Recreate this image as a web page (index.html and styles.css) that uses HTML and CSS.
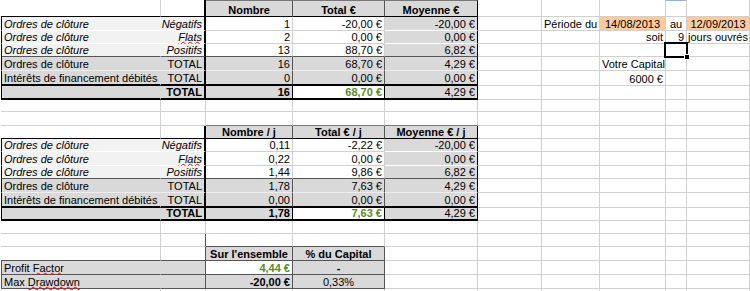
FILE: index.html
```html
<!DOCTYPE html>
<html lang="fr">
<head>
<meta charset="utf-8">
<title>Statistiques</title>
<link rel="stylesheet" href="styles.css">
</head>
<body>
<div class="sheet">
  <!-- r1 -->
  <div class="c bK"></div>
  <div class="c bK rK2"></div>
  <div class="c f2 b m tD bK rD">Nombre</div>
  <div class="c f2 b m tD bK rD">Total €</div>
  <div class="c f2 b m tD bK rK">Moyenne €</div>
  <div class="c"></div><div class="c"></div><div class="c"></div><div class="c colsel"></div><div class="c"></div>
  <!-- r2 -->
  <div class="c f1 it lK bW rT">Ordres de clôture</div>
  <div class="c f1 it r bW rK2">Négatifs</div>
  <div class="c r">1</div>
  <div class="c r">-20,00 €</div>
  <div class="c f2 r bW rK">-20,00 €</div>
  <div class="c"></div>
  <div class="c">Période du</div>
  <div class="c fo m">14/08/2013</div>
  <div class="c m">au</div>
  <div class="c fo m">12/09/2013</div>
  <!-- r3 -->
  <div class="c f1 it lK bW rT">Ordres de clôture</div>
  <div class="c f1 it r bW rK2"><span class="sq">Flats</span></div>
  <div class="c r">2</div>
  <div class="c r">0,00 €</div>
  <div class="c f2 r bW rK">0,00 €</div>
  <div class="c"></div><div class="c"></div>
  <div class="c r">soit</div>
  <div class="c r">9</div>
  <div class="c tight">jours ouvrés</div>
  <!-- r4 -->
  <div class="c f1 it lK bD rT">Ordres de clôture</div>
  <div class="c f1 it r bD rK2">Positifs</div>
  <div class="c r bD">13</div>
  <div class="c r bD">88,70 €</div>
  <div class="c f2 r bD rK">6,82 €</div>
  <div class="c"></div><div class="c"></div><div class="c"></div>
  <div class="c sel"></div>
  <div class="c"></div>
  <!-- r5 -->
  <div class="c f2 lK bL rT">Ordres de clôture</div>
  <div class="c f2 r bL rK2">TOTAL</div>
  <div class="c f2 r bL rD">16</div>
  <div class="c f2 r bL rD">68,70 €</div>
  <div class="c f2 r bL rK">4,29 €</div>
  <div class="c"></div><div class="c"></div>
  <div class="c">Votre Capital</div>
  <div class="c"></div><div class="c"></div>
  <!-- r6 -->
  <div class="c f2 lK bK2 rT">Intérêts de financement débités</div>
  <div class="c f2 r bK2 rK2">TOTAL</div>
  <div class="c f2 r bK2 rD">0</div>
  <div class="c f2 r bK2 rD">0,00 €</div>
  <div class="c f2 r bK2 rK">0,00 €</div>
  <div class="c"></div><div class="c"></div>
  <div class="c r">6000 €</div>
  <div class="c"></div><div class="c"></div>
  <!-- r7 -->
  <div class="c f2 lK bK2 rT"></div>
  <div class="c f2 b r bK2 rK2">TOTAL</div>
  <div class="c f2 b r bK2 rK">16</div>
  <div class="c b r g bK2 rK">68,70 €</div>
  <div class="c f2 r bK2 rK">4,29 €</div>
  <div class="c"></div><div class="c"></div><div class="c"></div><div class="c"></div><div class="c"></div>
  <!-- r8 -->
  <div class="c"></div><div class="c"></div><div class="c"></div><div class="c"></div><div class="c"></div>
  <div class="c"></div><div class="c"></div><div class="c"></div><div class="c"></div><div class="c"></div>
  <!-- r9 -->
  <div class="c"></div>
  <div class="c"></div>
  <div class="c tD0"></div><div class="c tD0"></div><div class="c tD0"></div>
  <div class="c"></div><div class="c"></div><div class="c"></div><div class="c"></div><div class="c"></div>
  <!-- r10 -->
  <div class="c bK"></div>
  <div class="c bK rK2"></div>
  <div class="c f2 b m bK rD">Nombre / j</div>
  <div class="c f2 b m bK rD">Total € / j</div>
  <div class="c f2 b m bK rK">Moyenne € / j</div>
  <div class="c"></div><div class="c"></div><div class="c"></div><div class="c"></div><div class="c"></div>
  <!-- r11 -->
  <div class="c f1 it lK bW rT">Ordres de clôture</div>
  <div class="c f1 it r bW rK2">Négatifs</div>
  <div class="c r">0,11</div>
  <div class="c r">-2,22 €</div>
  <div class="c f2 r bW rK">-20,00 €</div>
  <div class="c"></div><div class="c"></div><div class="c"></div><div class="c"></div><div class="c"></div>
  <!-- r12 -->
  <div class="c f1 it lK bW rT">Ordres de clôture</div>
  <div class="c f1 it r bW rK2"><span class="sq">Flats</span></div>
  <div class="c r">0,22</div>
  <div class="c r">0,00 €</div>
  <div class="c f2 r bW rK">0,00 €</div>
  <div class="c"></div><div class="c"></div><div class="c"></div><div class="c"></div><div class="c"></div>
  <!-- r13 -->
  <div class="c f1 it lK bD rT">Ordres de clôture</div>
  <div class="c f1 it r bD rK2">Positifs</div>
  <div class="c r bD">1,44</div>
  <div class="c r bD">9,86 €</div>
  <div class="c f2 r bD rK">6,82 €</div>
  <div class="c"></div><div class="c"></div><div class="c"></div><div class="c"></div><div class="c"></div>
  <!-- r14 -->
  <div class="c f2 lK bL rT">Ordres de clôture</div>
  <div class="c f2 r bL rK2">TOTAL</div>
  <div class="c f2 r bL rD">1,78</div>
  <div class="c f2 r bL rD">7,63 €</div>
  <div class="c f2 r bL rK">4,29 €</div>
  <div class="c"></div><div class="c"></div><div class="c"></div><div class="c"></div><div class="c"></div>
  <!-- r15 -->
  <div class="c f2 lK bK2 rT">Intérêts de financement débités</div>
  <div class="c f2 r bK2 rK2">TOTAL</div>
  <div class="c f2 r bK2 rD">0,00</div>
  <div class="c f2 r bK2 rD">0,00 €</div>
  <div class="c f2 r bK2 rK">0,00 €</div>
  <div class="c"></div><div class="c"></div><div class="c"></div><div class="c"></div><div class="c"></div>
  <!-- r16 -->
  <div class="c f2 lK bK2 rT"></div>
  <div class="c f2 b r bK2 rK2">TOTAL</div>
  <div class="c f2 b r bK2 rK">1,78</div>
  <div class="c b r g bK2 rK">7,63 €</div>
  <div class="c f2 r bK2 rK">4,29 €</div>
  <div class="c"></div><div class="c"></div><div class="c"></div><div class="c"></div><div class="c"></div>
  <!-- r17 -->
  <div class="c"></div><div class="c"></div><div class="c"></div><div class="c"></div><div class="c"></div>
  <div class="c"></div><div class="c"></div><div class="c"></div><div class="c"></div><div class="c"></div>
  <!-- r18 -->
  <div class="c"></div>
  <div class="c rD"></div>
  <div class="c bD"></div>
  <div class="c bD"></div>
  <div class="c"></div>
  <div class="c"></div><div class="c"></div><div class="c"></div><div class="c"></div><div class="c"></div>
  <!-- r19 -->
  <div class="c bD"></div>
  <div class="c bD rD"></div>
  <div class="c f2 b m bD rD">Sur l'ensemble</div>
  <div class="c f2 b m bD rD">% du Capital</div>
  <div class="c"></div>
  <div class="c"></div><div class="c"></div><div class="c"></div><div class="c"></div><div class="c"></div>
  <!-- r20 -->
  <div class="c f2 lD bD rT"><span>Profit <span class="sq">Factor</span></span></div>
  <div class="c f2 bD rD"></div>
  <div class="c b r g bD rD">4,44 €</div>
  <div class="c f2 b m bD rD">-</div>
  <div class="c"></div>
  <div class="c"></div><div class="c"></div><div class="c"></div><div class="c"></div><div class="c"></div>
  <!-- r21 -->
  <div class="c f2 lD bD rT"><span>Max <span class="sq">Drawdown</span></span></div>
  <div class="c f2 bD rD"></div>
  <div class="c f2 b r bD rD">-20,00 €</div>
  <div class="c f2 m bD rD">0,33%</div>
  <div class="c"></div>
  <div class="c"></div><div class="c"></div><div class="c"></div><div class="c"></div><div class="c"></div>
  <!-- r22 -->
  <div class="c"></div><div class="c"></div><div class="c"></div><div class="c"></div><div class="c"></div>
  <div class="c"></div><div class="c"></div><div class="c"></div><div class="c"></div><div class="c"></div>
</div>
</body>
</html>
```
FILE: styles.css
```css
html, body {
  margin: 0;
  padding: 0;
  background: #ffffff;
}
body {
  font-family: "Liberation Sans", Arial, sans-serif;
  font-size: 11px;
  color: #000;
  overflow: hidden;
  padding-left: 1px;
}
.sheet {
  display: grid;
  grid-template-columns: 160px 45px 87px 92px 93px 64px 58px 66px 21px 63px;
  grid-template-rows:
    17px 14px 13px 13px 14px 15px 14px 12px 14px
    13px 13px 14px 13px 14px 15px 13px 13px 13px
    14px 14px 14px 10px;
}
.c {
  box-sizing: border-box;
  border-right: 1px solid #d0d0d0;
  border-bottom: 1px solid #d0d0d0;
  padding: 0 2px 0 2px;
  display: flex;
  align-items: flex-end;
  white-space: nowrap;
  line-height: 12px;
  min-width: 0;
}
.tight { padding-left: 1px; }
.it { font-style: italic; }
.b { font-weight: bold; }
.r { justify-content: flex-end; }
.m { justify-content: center; }
.g { color: #5a8a2c; }
.f1 { background: #f2f2f2; }
.f2 { background: #d9d9d9; }
.fo { background: #fbcb9e; }

.rK { border-right: 1px solid #000; }
.rK2 { border-right: 2px solid #000; }
.rD { border-right: 1px solid #555; }
.rT { border-right-color: transparent; }
.bK { border-bottom: 1px solid #000; }
.bK2 { border-bottom: 2px solid #000; }
.bD { border-bottom: 1px solid #555; }
.bW { border-bottom-color: #ffffff; }
.bL { border-bottom-color: #ededed; }
.tD { border-top: 1px solid #777; }
.tD0 { border-bottom-color: #777; }
.lK { border-left: 1px solid #000; }
.lD { border-left: 1px solid #555; }

.sq {
  text-decoration-line: underline;
  text-decoration-style: wavy;
  text-decoration-color: #ff0000;
  text-decoration-thickness: 1px;
  text-decoration-skip-ink: none;
  text-underline-offset: 0;
}
.sel { position: relative; }
.sel::after {
  content: "";
  position: absolute;
  left: -2px;
  top: -2px;
  right: -2px;
  bottom: -2px;
  border: 2px solid #000;
}
.sel::before {
  content: "";
  position: absolute;
  right: -4px;
  bottom: -4px;
  width: 4px;
  height: 4px;
  background: #000;
  border: 1px solid #fff;
  z-index: 1;
}
.colsel { position: relative; }
.colsel::before {
  content: "";
  position: absolute;
  left: 0;
  right: 0;
  top: 0;
  height: 1px;
  background: #8ab4e6;
}
```
